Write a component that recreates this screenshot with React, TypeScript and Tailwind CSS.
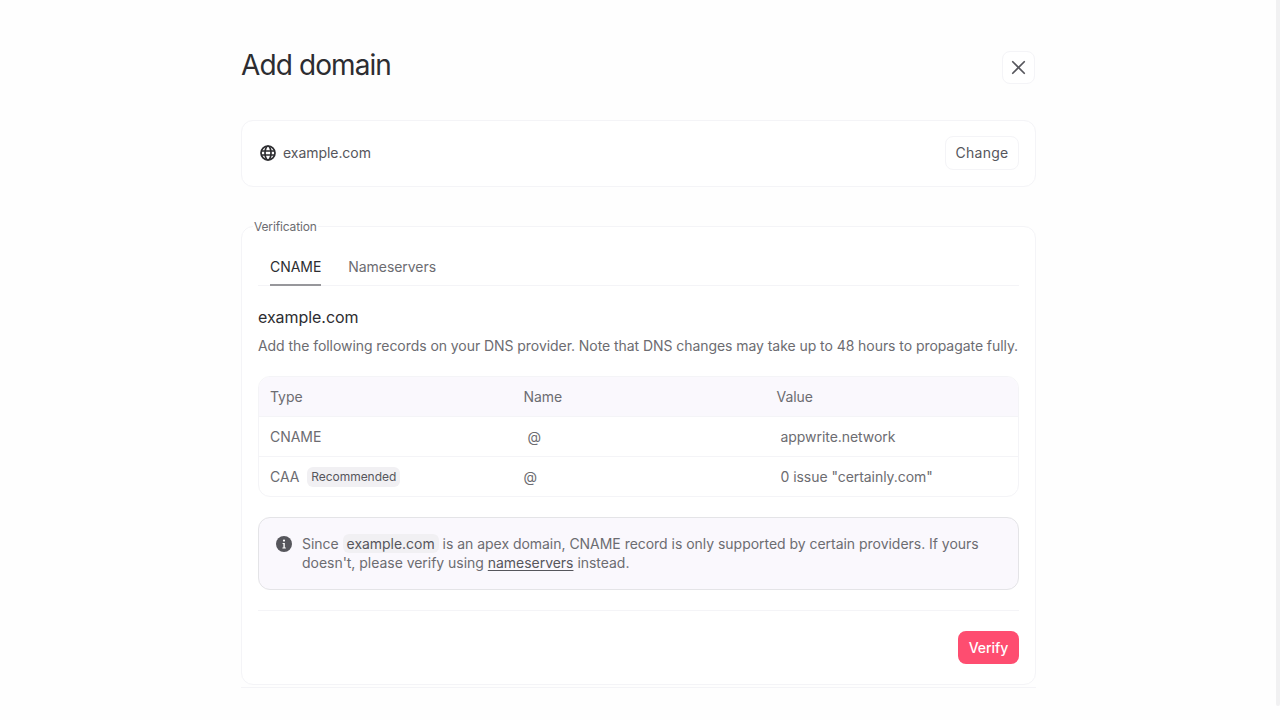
import { X } from "lucide-react";

const font = { fontFamily: "Inter, 'Liberation Sans', sans-serif" };

function GlobeIcon() {
  return (
    <svg width="16" height="16" viewBox="0 0 16 16" fill="none" stroke="#2d2d31" strokeWidth="1.7">
      <circle cx="8" cy="8" r="7" />
      <ellipse cx="8" cy="8" rx="3" ry="7" />
      <path d="M1 6h14M1 10h14" />
    </svg>
  );
}

function InfoIcon() {
  return (
    <svg width="16" height="16" viewBox="0 0 16 16">
      <circle cx="8" cy="8" r="8" fill="#56565c" />
      <circle cx="8" cy="4.6" r="1.1" fill="#fdfdfd" />
      <path d="M6.6 7h2.2v4.4h1v1.1H6.4v-1.1h1V8.1h-.8z" fill="#fdfdfd" />
    </svg>
  );
}

function Row({ type, name, value, badge, indent, header }: { type: string; name: string; value: string; badge?: boolean; indent?: boolean; header?: boolean }) {
  return (
    <div className={`grid grid-cols-[253.5px_253px_1fr] items-center px-[11px] text-[14px] text-[#6c6c71] ${header ? "h-[39px] bg-[#faf8fd]" : "h-10 border-t border-[#f4f4f7]"}`}>
      <div className="flex items-center gap-2">
        {type}
        {badge && <span className="rounded-md bg-[#f1f0f3] px-1 py-0.5 text-[12px] leading-4 text-[#56565c]">Recommended</span>}
      </div>
      <div className={indent ? "pl-1" : ""}>{name}</div>
      <div className={header ? "" : "pl-1"}>{value}</div>
    </div>
  );
}

export default function App() {
  return (
    <div className="flex h-[720px] w-full justify-center overflow-hidden bg-[#fefefe] pr-[3px] tracking-[-0.05px]" style={font}>
      <div className="w-[795px]">
        <div className="flex h-[120px] items-start justify-between">
          <h1 className="mt-[46px] text-[28px] leading-[38px] font-normal tracking-[-0.9px] text-[#2d2d31]">Add domain</h1>
          <button className="mt-[51px] mr-px flex size-[33px] items-center justify-center rounded-lg border border-[#f4f4f7] bg-white">
            <X size={23} color="#56565c" strokeWidth={1.8} />
          </button>
        </div>

        <div className="flex h-[67px] items-center justify-between rounded-xl border border-[#f4f4f7] bg-white pr-[15px] pb-[2px] pl-[18px]">
          <div className="flex items-center gap-[7px] text-[14px] text-[#56565c]">
            <GlobeIcon />
            example.com
          </div>
          <button className="mr-px h-[34px] w-[74px] rounded-lg border border-[#f4f4f7] bg-white text-[14px] tracking-[0.25px] text-[#56565c]">Change</button>
        </div>

        <fieldset className="mt-[31px] h-[467px] min-w-0 rounded-xl border border-[#f4f4f7] bg-white px-4">
          <legend className="ml-[-5px] px-px text-[12px] leading-[17px] tracking-[-0.15px] text-[#6c6c71]">Verification</legend>

          <div className="mt-[13px] flex h-[38px] gap-[27px] border-b border-[#f4f4f7] pl-3 text-[14px]">
            <div className="relative pt-[8px] text-[#2d2d31]">
              CNAME
              <span className="absolute right-0 -bottom-px left-0 h-[2px] bg-[#97979b]" />
            </div>
            <div className="pt-[8px] text-[#6c6c71]">Nameservers</div>
          </div>

          <h2 className="mt-[20px] text-[16px] leading-[22px] font-normal text-[#2d2d31]">example.com</h2>
          <p className="mt-[7px] text-[14px] leading-[22px] tracking-[-0.06px] whitespace-nowrap text-[#6c6c71]">
            Add the following records on your DNS provider. Note that DNS changes may take up to 48 hours to propagate fully.
          </p>

          <div className="mt-[19px] overflow-hidden rounded-xl border border-[#f4f4f7]">
            <Row header type="Type" name="Name" value="Value" />
            <Row type="CNAME" name="@" value="appwrite.network" indent />
            <Row type="CAA" name="@" value={'0 issue "certainly.com"'} badge />
          </div>

          <div className="mt-[20px] flex h-[73px] gap-[10px] rounded-xl border border-[#e4e4e7] bg-[#faf8fd] px-[17px] pt-[16px] text-[14px] leading-[19px] tracking-[-0.03px] text-[#6c6c71]">
            <div className="shrink-0 pt-[2px]">
              <InfoIcon />
            </div>
            <p>
              Since <span className="rounded-md bg-[#f1f0f3] px-1 py-px text-[#56565c]">example.com</span> is an apex domain, CNAME record is only supported by certain providers. If yours doesn't, please verify using{" "}
              <span className="text-[#56565c] underline underline-offset-2">nameservers</span> instead.
            </p>
          </div>

          <div className="mt-[20px] flex justify-end border-t border-[#f4f4f7] pt-[20px]">
            <button className="h-[33px] w-[61px] rounded-lg bg-[#fe4d70] text-[14px] font-medium text-white">Verify</button>
          </div>
        </fieldset>
        <div className="mt-[2px] h-px bg-[#f4f4f7]" />
      </div>
      <div className="fixed top-0 right-0 h-[706px] w-[4px] rounded-b bg-[#f1f1f2]" />
    </div>
  );
}
